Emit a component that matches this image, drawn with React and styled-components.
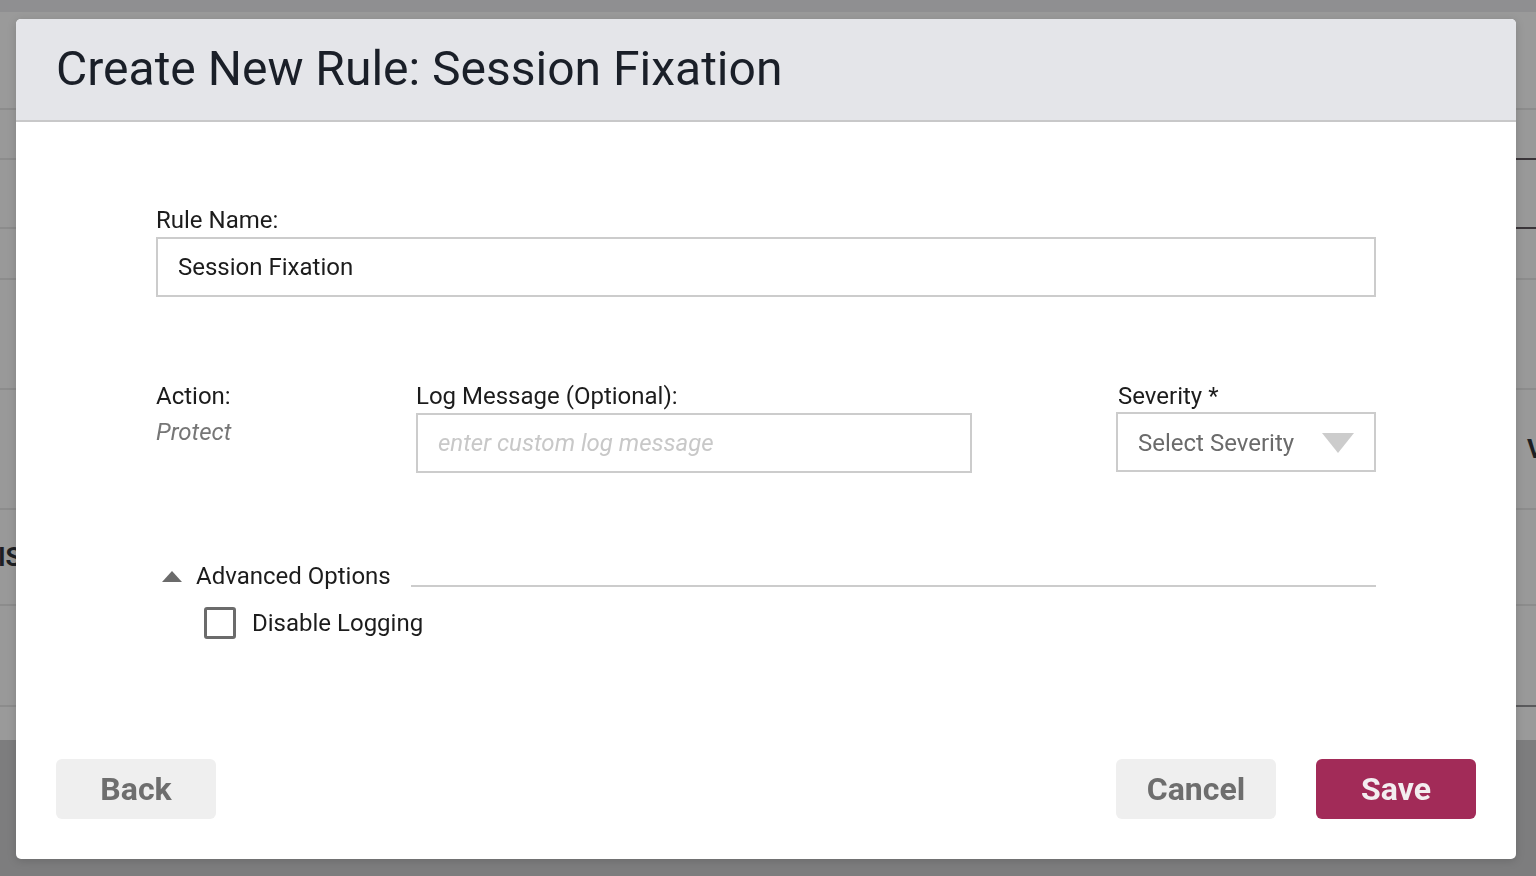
import React from 'react';
import styled, { createGlobalStyle } from 'styled-components';

const GlobalStyle = createGlobalStyle`
  html, body {
    margin: 0;
    padding: 0;
    height: 100%;
    overflow: hidden;
  }
  body {
    font-family: 'Roboto', 'Liberation Sans', sans-serif;
    background: #999999;
  }
  * {
    box-sizing: border-box;
  }
`;

const backRows = [
  { h: 12, tone: '#8f8f91', line: 'none' },
  { h: 98, tone: '#9a9a9a', line: '#8c8c8c' },
  { h: 50, tone: '#999999', line: '#3a3539', edge: true },
  { h: 69, tone: '#999999', line: '#3a3539', edge: true },
  { h: 51, tone: '#999999', line: '#8c8c8c' },
  { h: 110, tone: '#999999', line: '#8c8c8c' },
  { h: 120, tone: '#999999', line: '#8c8c8c', rightText: 'V' },
  { h: 96, tone: '#999999', line: '#8c8c8c', leftText: 'IS' },
  { h: 101, tone: '#999999', line: '#5a5a5c', edge: true },
  { h: 33, tone: '#9a9a9a', line: 'none' },
  { h: 136, tone: '#7d7d7e', line: 'none' },
];

function Backdrop() {
  return (
    <Page>
      {backRows.map((r, i) => (
        <BackRow key={i} $h={r.h} $tone={r.tone} $line={r.line} $edge={r.edge}>
          <EdgeText>{r.leftText}</EdgeText>
          <EdgeText $right>{r.rightText}</EdgeText>
        </BackRow>
      ))}
    </Page>
  );
}

function App() {
  return (
    <>
      <GlobalStyle />
      <Backdrop />
      <Modal>
        <Header>
          <Title>Create New Rule: Session Fixation</Title>
        </Header>
        <Body>
          <Field>
            <Label>Rule Name:</Label>
            <TextBox defaultValue="Session Fixation" />
          </Field>

          <FieldRow>
            <div>
              <Label>Action:</Label>
              <Value>Protect</Value>
            </div>
            <Field>
              <Label>Log Message (Optional):</Label>
              <TextBox placeholder="enter custom log message" />
            </Field>
            <div />
            <Field>
              <Label $indent>Severity *</Label>
              <Select>
                <span>Select Severity</span>
                <Caret />
              </Select>
            </Field>
          </FieldRow>

          <Advanced>
            <AdvancedHead>
              <Toggle />
              <AdvancedTitle>Advanced Options</AdvancedTitle>
              <Rule />
            </AdvancedHead>
            <CheckRow>
              <CheckBox />
              <span>Disable Logging</span>
            </CheckRow>
          </Advanced>
        </Body>
        <Footer>
          <Button>Back</Button>
          <Actions>
            <Button>Cancel</Button>
            <Button $primary>Save</Button>
          </Actions>
        </Footer>
      </Modal>
    </>
  );
}

const Page = styled.div`
  display: flex;
  flex-direction: column;
  height: 100vh;
`;

const BackRow = styled.div`
  height: ${(p) => p.$h}px;
  flex: none;
  display: flex;
  justify-content: space-between;
  align-items: center;
  background: ${(p) => p.$tone};
  border-bottom: ${(p) => (p.$line === 'none' ? '0' : `2px solid ${p.$line}`)};
  border-image: ${(p) =>
    p.$edge
      ? `linear-gradient(to right, #8c8c8c 0, #8c8c8c 1512px, ${p.$line} 1512px) 1`
      : 'none'};
`;

const EdgeText = styled.span`
  font-family: 'Roboto', 'Liberation Sans', sans-serif;
  font-size: 26px;
  font-weight: 700;
  color: #1d1f24;
  margin-left: ${(p) => (p.$right ? '0' : '-2px')};
  margin-right: ${(p) => (p.$right ? '-8px' : '0')};
`;

const Modal = styled.div`
  position: fixed;
  top: 19px;
  left: 16px;
  width: 1500px;
  height: 840px;
  background: #ffffff;
  border-radius: 5px;
  overflow: hidden;
  display: flex;
  flex-direction: column;
  box-shadow: 0 2px 10px rgba(0, 0, 0, 0.15);
`;

const Header = styled.div`
  height: 103px;
  flex: none;
  display: flex;
  align-items: center;
  padding: 0 40px 2px;
  background: #e4e5e9;
  border-bottom: 2px solid #c8c8c9;
`;

const Title = styled.h1`
  margin: 0;
  font-size: 48px;
  font-weight: 400;
  color: #1a1f28;
  letter-spacing: 0;
`;

const Body = styled.div`
  flex: 1;
  padding: 84px 140px 0;
`;

const Field = styled.div`
  display: flex;
  flex-direction: column;
  gap: 3px;
`;

const Label = styled.label`
  font-size: 24px;
  line-height: 28px;
  color: #1c1c1c;
  padding-left: ${(p) => (p.$indent ? '2px' : '0')};
`;

const Value = styled.div`
  margin-top: 8px;
  font-size: 24px;
  line-height: 28px;
  font-style: italic;
  color: #767676;
`;

const TextBox = styled.input`
  height: 60px;
  width: 100%;
  padding: 0 20px;
  border: 2px solid #cccccc;
  border-radius: 0;
  outline: none;
  font-family: 'Roboto', 'Liberation Sans', sans-serif;
  font-size: 24px;
  color: #1c1c1c;
  &::placeholder {
    color: #c8c8c8;
    font-style: italic;
  }
`;

const FieldRow = styled.div`
  display: grid;
  grid-template-columns: 260px 556px 1fr 260px;
  margin-top: 85px;
`;

const Select = styled.div`
  height: 60px;
  margin-top: -1px;
  display: flex;
  align-items: center;
  justify-content: space-between;
  padding: 2px 20px 0 20px;
  border: 2px solid #cccccc;
  font-size: 24px;
  color: #6b6b6b;
`;

const Caret = styled.span`
  width: 0;
  height: 0;
  border-left: 16px solid transparent;
  border-right: 16px solid transparent;
  border-top: 20px solid #cccccc;
`;

const Advanced = styled.div`
  margin-top: 89px;
`;

const AdvancedHead = styled.div`
  display: flex;
  align-items: center;
  height: 28px;
`;

const Toggle = styled.span`
  width: 0;
  height: 0;
  margin-left: 6px;
  margin-right: 14px;
  border-left: 10px solid transparent;
  border-right: 10px solid transparent;
  border-bottom: 11px solid #6b6b6b;
`;

const AdvancedTitle = styled.span`
  font-size: 24px;
  line-height: 28px;
  color: #1c1c1c;
`;

const Rule = styled.span`
  flex: 1;
  height: 2px;
  margin-left: 20px;
  margin-top: 20px;
  background: #cccccc;
`;

const CheckRow = styled.label`
  display: flex;
  align-items: center;
  gap: 16px;
  margin-top: 17px;
  padding-left: 48px;
  font-size: 24px;
  line-height: 28px;
  color: #1c1c1c;
`;

const CheckBox = styled.span`
  width: 32px;
  height: 32px;
  border: 3px solid #6b6b6b;
  border-radius: 3px;
`;

const Footer = styled.div`
  display: flex;
  justify-content: space-between;
  padding: 0 40px 40px;
`;

const Actions = styled.div`
  display: flex;
  gap: 40px;
`;

const Button = styled.button`
  width: 160px;
  height: 60px;
  border: none;
  border-radius: 6px;
  font-family: 'Roboto', 'Liberation Sans', sans-serif;
  font-size: 32px;
  font-weight: 700;
  background: ${(p) => (p.$primary ? '#a22b58' : '#efefef')};
  color: ${(p) => (p.$primary ? '#f3eef0' : '#6e6e6e')};
  cursor: pointer;
`;

export default App;
